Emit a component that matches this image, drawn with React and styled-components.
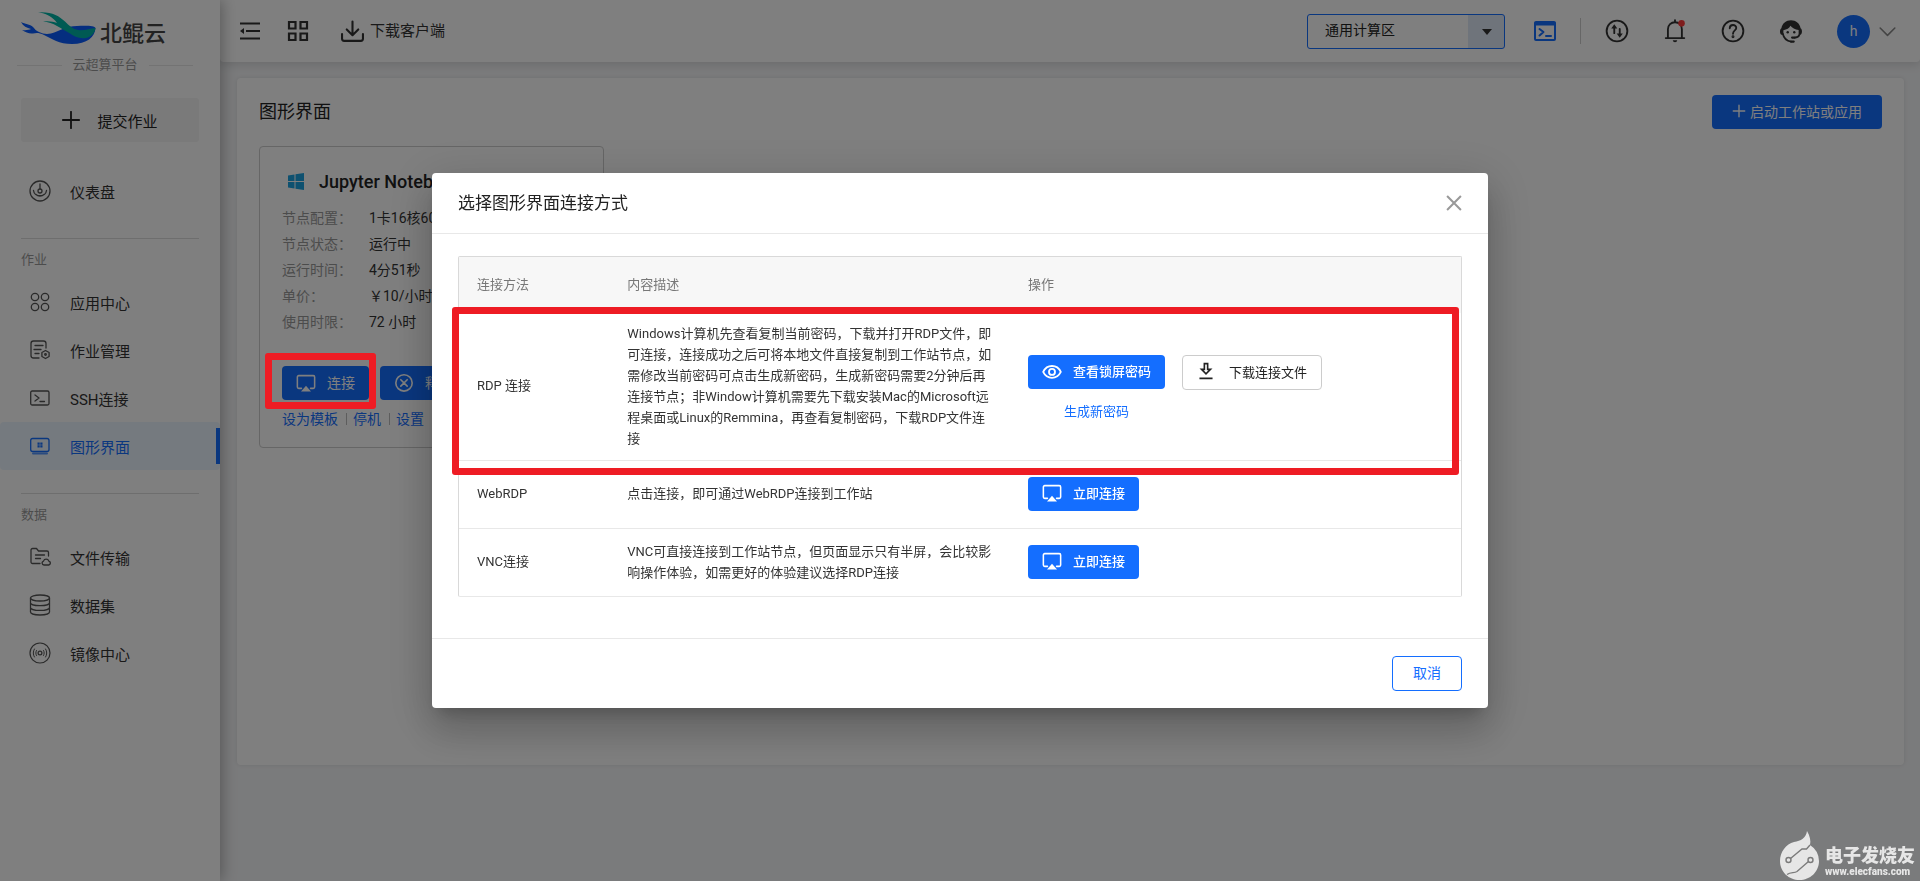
import React from 'react';
import styled, { createGlobalStyle, css } from 'styled-components';

const font = 'Roboto, "Noto Sans CJK SC", sans-serif';
const blue = '#146eff';
const red = '#ee1c24';

const GlobalStyle = createGlobalStyle`
  *, *::before, *::after { box-sizing: border-box; }
  body { margin: 0; font-family: ${font}; font-size: 14px; color: #222; background: #f5f6f8; }
  button, select { font-family: inherit; cursor: pointer; }
  button { padding: 0; border: 0; background: none; color: inherit; }
  a { text-decoration: none; color: ${blue}; }
  svg { display: block; flex: none; }
  h1, h2, h3, p, ul, dl, dd { margin: 0; padding: 0; font-weight: 400; }
`;

const Page = styled.div`
  display: flex;
  min-height: 100vh;
`;

/* ---------- sidebar ---------- */
const Sidebar = styled.aside`
  position: relative;
  z-index: 2;
  flex: none;
  width: 220px;
  background: #fff;
  box-shadow: 2px 0 14px rgba(0, 0, 0, 0.3);
`;
const Brand = styled.div`
  display: flex;
  align-items: flex-end;
  gap: 3px;
  height: 50px;
  padding-left: 21px;
  font-size: 22px;
  font-weight: 500;
  line-height: 32px;
  color: #444;
  svg { margin-bottom: 5px; }
`;
const Platform = styled.p`
  display: flex;
  align-items: center;
  gap: 11px;
  margin: 5px 27px 0 17px;
  font-size: 13px;
  line-height: 20px;
  color: #999;
  &::before, &::after { content: ''; flex: 1; height: 1px; background: #e6e6e6; }
`;
const SubmitButton = styled.button`
  display: flex;
  align-items: center;
  justify-content: center;
  gap: 17px;
  width: 178px;
  height: 44px;
  margin: 23px 21px 25px;
  border-radius: 3px;
  background: #f4f4f4;
  font-size: 15px;
`;
const MenuList = styled.ul`
  list-style: none;
`;
const MenuLink = styled.a`
  position: relative;
  display: flex;
  align-items: center;
  gap: 19px;
  height: 48px;
  padding-left: 29px;
  font-size: 15px;
  color: #333;
  svg { color: #555; }
  ${p => p.$active && css`
    border-radius: 4px;
    background: #ebf5ff;
    color: ${blue};
    svg { color: ${blue}; }
    &::after {
      content: '';
      position: absolute;
      right: 0;
      top: 6px;
      width: 4px;
      height: 36px;
      background: ${blue};
    }
  `}
`;
const GroupTitle = styled.h3`
  margin: 23px 21px 8px;
  padding-top: 11px;
  border-top: 1px solid #dcdcdc;
  font-size: 13px;
  line-height: 20px;
  color: #999;
`;

/* ---------- header ---------- */
const Main = styled.div`
  flex: 1;
  min-width: 0;
`;
const Header = styled.header`
  display: flex;
  align-items: center;
  justify-content: space-between;
  height: 62px;
  padding: 0 24px 0 19px;
  border-radius: 0 0 4px 4px;
  background: #fff;
  box-shadow: 0 3px 10px rgba(0, 0, 0, 0.12);
`;
const HeaderGroup = styled.div`
  display: flex;
  align-items: center;
  gap: ${p => p.$gap}px;
`;
const IconButton = styled.button`
  display: flex;
  align-items: center;
  color: ${p => p.$color || '#333'};
`;
const ClientButton = styled(IconButton)`
  gap: 6px;
  margin-left: 6px;
  font-size: 15px;
  line-height: 24px;
`;
const RegionPicker = styled.label`
  position: relative;
  display: block;
  margin-right: 5px;
`;
const RegionSelect = styled.select`
  appearance: none;
  width: 198px;
  height: 35px;
  padding: 0 50px 2px 17px;
  border: 1px solid ${blue};
  border-radius: 3px;
  background: linear-gradient(#dfe8f7, #dfe8f7) right / 36px 100% no-repeat, #fff;
  font-size: 14px;
  color: #222;
`;
const Caret = styled.i`
  position: absolute;
  right: 13px;
  top: 15px;
  border: 5px solid transparent;
  border-top: 6px solid #333;
  border-bottom: 0;
  pointer-events: none;
`;
const Separator = styled.i`
  width: 1px;
  height: 26px;
  background: #ccc;
`;
const Account = styled.button`
  display: flex;
  align-items: center;
  gap: 9px;
  color: #888;
`;
const Avatar = styled.span`
  width: 33px;
  height: 33px;
  border-radius: 50%;
  background: ${blue};
  color: #fff;
  font-size: 14px;
  line-height: 33px;
  text-align: center;
`;

/* ---------- content ---------- */
const Panel = styled.main`
  margin: 16px 16px 0 17px;
  min-height: calc(100vh - 194px);
  padding: 17px 22px;
  border-radius: 4px;
  background: #fff;
  box-shadow: 0 0 4px rgba(0, 0, 0, 0.1);
`;
const PanelHead = styled.div`
  display: flex;
  align-items: center;
  justify-content: space-between;
  margin-bottom: 17px;
`;
const PanelTitle = styled.h1`
  font-size: 18px;
  line-height: 30px;
`;
const Button = styled.button`
  display: inline-flex;
  align-items: center;
  gap: ${p => p.$gap ?? 11}px;
  height: ${p => (p.$outline ? 35 : 34)}px;
  padding: 0 ${p => p.$pad ?? 14}px 3px;
  border: ${p => (p.$outline ? '1px solid ' + p.$outline : '0')};
  border-radius: 4px;
  background: ${p => (p.$outline ? '#fff' : blue)};
  color: ${p => p.$text || '#fff'};
  font-size: ${p => p.$size || 13}px;
  font-weight: ${p => (p.$bold ? 500 : 400)};
  white-space: nowrap;
`;
const Card = styled.section`
  width: 345px;
  padding: 21px 22px 18px;
  border: 1px solid #ccc;
  border-radius: 4px;
`;
const CardTitle = styled.h2`
  display: flex;
  align-items: center;
  gap: 15px;
  padding-left: 6px;
  margin-bottom: 9px;
  font-size: 18px;
  font-weight: 500;
  line-height: 27px;
  white-space: nowrap;
`;
const Spec = styled.dl`
  display: grid;
  grid-template-columns: 87px 1fr;
  grid-auto-rows: 26px;
  align-items: center;
  dt { color: #999; }
  dd { color: #333; }
`;
const CardActions = styled.div`
  display: flex;
  gap: 11px;
  margin: 32px 0 9px;
`;
const Marked = styled.div`
  position: relative;
  &::after {
    content: '';
    position: absolute;
    z-index: 20;
    inset: -13px -7px -9px -17px;
    border: 7px solid ${red};
    border-radius: 3px;
    pointer-events: none;
  }
`;
const CardLinks = styled.div`
  display: flex;
  line-height: 20px;
  a + a {
    margin-left: 8px;
    padding-left: 7px;
    background: linear-gradient(#bbb, #bbb) left / 1px 12px no-repeat;
  }
`;

/* ---------- dialog ---------- */
const Overlay = styled.div`
  position: fixed;
  inset: 0;
  z-index: 10;
  display: flex;
  align-items: center;
  justify-content: center;
  background: rgba(0, 0, 0, 0.5);
`;
const Dialog = styled.div`
  width: 55%;
  border-radius: 4px;
  background: #fff;
  box-shadow: 0 11px 15px -7px rgba(0, 0, 0, 0.2), 0 24px 38px 3px rgba(0, 0, 0, 0.14),
    0 9px 46px 8px rgba(0, 0, 0, 0.12);
`;
const DialogHead = styled.div`
  display: flex;
  align-items: center;
  justify-content: space-between;
  height: 61px;
  padding: 0 26px;
  border-bottom: 1px solid #e8e8e8;
`;
const DialogTitle = styled.h2`
  font-size: 17px;
  line-height: 24px;
`;
const DialogBody = styled.div`
  position: relative;
  padding: 22px 26px 41px;
`;
const DialogFoot = styled.div`
  display: flex;
  justify-content: flex-end;
  padding: 17px 26px;
  border-top: 1px solid #e8e8e8;
`;
const Table = styled.table`
  width: 100%;
  table-layout: fixed;
  border: 1px solid #d9d9d9;
  border-bottom-color: #e8e8e8;
  border-radius: 2px;
  border-spacing: 0;
  font-size: 13px;
  line-height: 21px;
  color: #333;
  th, td { padding: 0 18px 2px; text-align: left; font-weight: 400; }
  th { height: 56px; background: #f7f7f7; color: #777; }
  td { height: 68px; }
  tbody tr + tr td { border-top: 1px solid #e8e8e8; }
`;
const Col = styled.col`
  width: ${p => p.$width};
`;
const TallRow = styled.tr`
  && td { height: 147px; }
`;
const RowMark = styled.div`
  position: absolute;
  top: 73px;
  left: 20px;
  right: 29px;
  height: 168px;
  border: 7px solid ${red};
  border-radius: 3px;
  pointer-events: none;
`;
const Actions = styled.div`
  display: grid;
  grid-template-columns: auto auto;
  justify-content: start;
  justify-items: center;
  column-gap: 17px;
  row-gap: 11px;
  padding-top: 6px;
`;

/* ---------- watermark ---------- */
const Watermark = styled.div`
  position: fixed;
  right: 5px;
  bottom: 1px;
  z-index: 30;
  display: flex;
  align-items: flex-end;
  gap: 6px;
  color: #e6e6e6;
`;
const WatermarkText = styled.div`
  padding-bottom: 3px;
  font-size: 18px;
  font-weight: 900;
  line-height: 20px;
  small { display: block; font-size: 10px; font-weight: 900; line-height: 11px; }
`;

/* ---------- icons ---------- */
const Icon = ({ size = 22, sw = 1.3, children, ...rest }) => (
  <svg width={size} height={size} viewBox="0 0 22 22" fill="none" stroke="currentColor"
    strokeWidth={sw} strokeLinecap="round" strokeLinejoin="round" aria-hidden="true" {...rest}>
    {children}
  </svg>
);
const solid = { fill: 'currentColor', stroke: 'none' };

const icons = {
  dash: <Icon><circle cx="11" cy="11" r="10" /><circle cx="11" cy="11" r="2" /><path d="M11 4v5M4.500 10.500c1 7 12 7 13 0M7 14.500c2 2 6 2 8 0" /></Icon>,
  apps: <Icon><circle cx="6" cy="6" r="3.700" /><circle cx="16" cy="6" r="3.700" /><circle cx="6" cy="16" r="3.700" /><circle cx="16" cy="16" r="3.700" /></Icon>,
  jobs: <Icon><path d="M17 9V4.500A2.500 2.500 0 0 0 14.500 2h-10A2.500 2.500 0 0 0 2 4.500v12A2.500 2.500 0 0 0 4.500 19H10M6 6.500h8M5 10.500h7M6 14.500h4" /><path d="M16.500 11.500l3.600 2v4l-3.600 2-3.600-2v-4z" /><circle cx="16.500" cy="15.500" r=".8" /></Icon>,
  ssh: <Icon><rect x="1.700" y="4" width="18.300" height="14" rx="1.500" /><path d="M6 8l4 3-4 3M11 14.500h4.500" /></Icon>,
  gui: <Icon><rect x="1.700" y="3.500" width="18.300" height="13" rx="2" /><path d="M4 18.500h14" strokeWidth="2" opacity=".7" /><path {...solid} d="M8.500 7.500h2.200v2.200H8.500zM11.300 7.500h2.200v2.200h-2.200zM8.500 10.300h2.200v2.200H8.500zM11.300 10.300h2.200v2.200h-2.200z" /></Icon>,
  files: <Icon><path d="M11 17.500H3.500A1.500 1.500 0 0 1 2 16V4a1.500 1.500 0 0 1 1.500-1.500h4L9.500 5H18a1.500 1.500 0 0 1 1.500 1.500V10M6.500 9h9M6.500 12.500h5" /><path d="M15 19a2 2 0 0 1-.5-3.900 2.800 2.800 0 0 1 5.300 0A2 2 0 0 1 19.800 19z" /></Icon>,
  data: <Icon><ellipse cx="11" cy="4" rx="9.500" ry="3" /><path d="M1.500 4v14c0 1.700 4.200 3 9.500 3s9.500-1.300 9.500-3V4M1.500 8.700c0 1.700 4.200 3 9.500 3s9.500-1.300 9.500-3M1.500 13.400c0 1.700 4.200 3 9.500 3s9.500-1.300 9.500-3" /></Icon>,
  image: <Icon sw={1.200}><circle cx="11" cy="11" r="10" /><circle cx="11" cy="11" r="1.900" /><path d="M7.500 8.500c-.9 1.700-.9 3.300 0 5M14.500 8.500c.9 1.700.9 3.300 0 5M5.400 7c-1.500 2.600-1.500 5.400 0 8M16.600 7c1.500 2.600 1.500 5.400 0 8" strokeWidth="1" /></Icon>,
  plus: <Icon size={18} sw={2.200}><path d="M11 1v20M1 11h20" /></Icon>,
  plusThin: <Icon size={14} sw={2.200}><path d="M11 2v18M2 11h18" /></Icon>,
  fold: <Icon sw={2} strokeLinecap="butt"><path d="M1 3.500h20M7 11h14M1 18.500h20" /><path {...solid} d="M1 11l4-3v6z" /></Icon>,
  grid: <Icon sw={2.200} strokeLinejoin="miter"><path d="M2 2h6.500v6.500H2zM13.500 2H20v6.500h-6.500zM2 13.500h6.500V20H2zM13.500 13.500H20V20h-6.500z" /></Icon>,
  download: <Icon size={23} sw={2}><path d="M11 1.500V14M5.500 9l5.500 5.500L16.500 9M1 13.500V18a2 2 0 0 0 2 2h16a2 2 0 0 0 2-2v-4.500" /></Icon>,
  terminal: <Icon sw={2}><rect x="1" y="2" width="20" height="18" rx="1" /><path d="M1 4h20" strokeWidth="3" /><path d="M5.500 9l4 3-4 3.500M12 16h5" /></Icon>,
  transfer: <Icon size={24} sw={1.700}><circle cx="11" cy="11" r="9.500" /><path d="M8.500 13v-6M13.500 9v6" /><path {...solid} d="M5.700 8.700l2.800-4 2.800 4zM10.700 13.300l2.800 4 2.800-4z" /></Icon>,
  bell: <Icon size={24} sw={1.700}><path d="M2.500 17.500h17M4.500 17V9.500c0-4 3-6.500 6.500-6.500 3.500 0 6.300 2.500 6.300 6.500V17M11 1v1.500" /><path {...solid} d="M9 19.500h4c0 2.300-4 2.300-4 0z" /><circle cx="17" cy="4" r="3" fill="#ff3b3b" stroke="none" /></Icon>,
  help: <Icon size={24} sw={1.700}><circle cx="11" cy="11" r="9.500" /><path d="M8 8.500c0-4 6-4 6-.3 0 2.300-3 2.300-3 5.300" /><circle cx="11" cy="16.300" r=".5" /></Icon>,
  agent: <Icon size={24} sw={1.600}><path {...solid} d="M2.200 8.500C3 4 6.500 1.200 11 1.200S19 4 19.800 8.500c1.700 1 1.700 5 0 6H18V10c-3.300-.3-6-1.700-7.500-3.800C9.300 8.500 7.200 9.700 4 10.200v4.300H2.200c-1.700-1-1.700-5 0-6z" /><path d="M3.500 13.500c.9 4.200 4 6.700 7.500 7.200M18.700 14.500c-.5 1.800-2 2.500-4.200 2.500" /><path d="M12 17h2.500M11 20.700h2.500" strokeWidth="2" /><circle {...solid} cx="8" cy="12.200" r="1.100" /><circle {...solid} cx="14" cy="12.200" r="1.100" /></Icon>,
  chevron: <Icon size={17} sw={2}><path d="M1.500 6.500L11 16l9.500-9.500" /></Icon>,
  screen: <Icon size={20} sw={1.700}><path d="M6 18H3a1.500 1.500 0 0 1-1.500-1.500v-11A1.500 1.500 0 0 1 3 4h16a1.500 1.500 0 0 1 1.500 1.500v11A1.500 1.500 0 0 1 19 18h-3" /><path {...solid} d="M11 15l5.500 6.500h-11z" /></Icon>,
  release: <Icon size={20} sw={1.800}><circle cx="11" cy="12" r="9" /><path d="M7.500 8.500l7 7M14.500 8.500l-7 7" /></Icon>,
  eye: <Icon size={20} sw={2}><path d="M1.300 12C5.500 3.300 16.500 3.300 20.700 12 16.500 20.700 5.500 20.700 1.300 12z" /><circle cx="11" cy="12" r="3.300" /></Icon>,
  save: <Icon size={18} sw={2} strokeLinecap="butt" strokeLinejoin="miter"><path d="M9 2h4v7h3.500L11 14.500 5.500 9H9zM3 20h16" /></Icon>,
  close: <Icon size={16} sw={2.800} strokeLinecap="butt"><path d="M1.500 1.500l19 19M20.500 1.500l-19 19" /></Icon>,
};

const WhaleLogo = () => (
  <svg width="76" height="33" viewBox="0 0 76 33" aria-hidden="true">
    <path fill="#0a5cff" d="M0 10c4 2 9 2 12 5 2 2 3 4 6 5 4 2 8 2.500 12 1.500 9-2.500 15-7.500 26-7.500 8-.5 18-.5 18.500 2C74 25 66 32 51 32c-13 0-20-5-28-9-5-2.500-8-2-11-1.500-4 .5-7-1-11-3.500 4 .5 7 0 9-1C6 16 2 14 0 10z" />
    <path fill="#00b5a6" d="M17 .3C31-.5 38 4 44 9.500c4 4.500 8 7.500 13 8.500 6 1 12-1.500 17.500-2C74 21 70 25 65 26c-7 1-12-1.500-16-4.500-4-2-8-5-13-7.500C32 11.500 27 10 22 9.500c6-.8 10 0 14 1.500C32 5 25 1.500 17 .3z" />
  </svg>
);
const WindowsLogo = () => (
  <svg width="16" height="17" viewBox="0 0 16 17" fill="#1da3e0" aria-hidden="true">
    <path d="M0 2.500L6.500 1.500v6.500H0zM7.500 1.300L16 0v8H7.500zM0 9h6.500v6.600L0 14.600zM7.500 9H16v8l-8.500-1.300z" />
  </svg>
);
const FlameLogo = () => (
  <svg width="39" height="49" viewBox="0 0 39 49" aria-hidden="true">
    <path fill="currentColor" d="M27 0c3 5 4 10 3 14a19.500 19.500 0 0 1 9 16c0 11-9 19-19.500 19S0 41 0 30c0-9 6-17 14-19 7-1 12-4 13-11z" />
    <g fill="none" stroke="#7b7b7b" strokeWidth="1.400">
      <circle cx="8.500" cy="29" r="2.500" /><circle cx="30.500" cy="29" r="2.500" />
      <path d="M10.500 27.500L22 18h4.500l3.500-4M28.500 30.500L17 40.500c-3 2-6 0-10 3" />
    </g>
  </svg>
);

/* ---------- page parts ---------- */
const MenuItem = ({ icon, label, active }) => (
  <li><MenuLink href="#" $active={active}>{icons[icon]}{label}</MenuLink></li>
);

const specs = [
  ['节点配置：', '1卡16核60G'],
  ['节点状态：', '运行中'],
  ['运行时间：', '4分51秒'],
  ['单价：', '￥10/小时'],
  ['使用时限：', '72 小时'],
];

export default function App() {
  return (
    <>
      <GlobalStyle />
      <Page>
        <Sidebar>
          <Brand><WhaleLogo />北鲲云</Brand>
          <Platform>云超算平台</Platform>
          <SubmitButton>{icons.plus}提交作业</SubmitButton>
          <MenuList>
            <MenuItem icon="dash" label="仪表盘" />
          </MenuList>
          <GroupTitle>作业</GroupTitle>
          <MenuList>
            <MenuItem icon="apps" label="应用中心" />
            <MenuItem icon="jobs" label="作业管理" />
            <MenuItem icon="ssh" label="SSH连接" />
            <MenuItem icon="gui" label="图形界面" active />
          </MenuList>
          <GroupTitle>数据</GroupTitle>
          <MenuList>
            <MenuItem icon="files" label="文件传输" />
            <MenuItem icon="data" label="数据集" />
            <MenuItem icon="image" label="镜像中心" />
          </MenuList>
        </Sidebar>

        <Main>
          <Header>
            <HeaderGroup $gap={26}>
              <IconButton aria-label="收起菜单">{icons.fold}</IconButton>
              <IconButton aria-label="应用">{icons.grid}</IconButton>
              <ClientButton>{icons.download}下载客户端</ClientButton>
            </HeaderGroup>
            <HeaderGroup $gap={24}>
              <RegionPicker>
                <RegionSelect aria-label="计算区" defaultValue="通用计算区">
                  <option>通用计算区</option>
                </RegionSelect>
                <Caret />
              </RegionPicker>
              <IconButton $color={blue} aria-label="终端">{icons.terminal}</IconButton>
              <Separator />
              <HeaderGroup $gap={34}>
                <IconButton aria-label="传输">{icons.transfer}</IconButton>
                <IconButton aria-label="通知">{icons.bell}</IconButton>
                <IconButton aria-label="帮助">{icons.help}</IconButton>
                <IconButton aria-label="客服">{icons.agent}</IconButton>
                <Account aria-label="账户"><Avatar>h</Avatar>{icons.chevron}</Account>
              </HeaderGroup>
            </HeaderGroup>
          </Header>

          <Panel>
            <PanelHead>
              <PanelTitle>图形界面</PanelTitle>
              <Button $gap={4} $pad={20} $size={14}>{icons.plusThin}启动工作站或应用</Button>
            </PanelHead>
            <Card>
              <CardTitle><WindowsLogo />Jupyter Notebook</CardTitle>
              <Spec>
                {specs.map(([k, v]) => (
                  <React.Fragment key={k}><dt>{k}</dt><dd>{v}</dd></React.Fragment>
                ))}
              </Spec>
              <CardActions>
                <Marked><Button $size={14}>{icons.screen}连接</Button></Marked>
                <Button $size={14}>{icons.release}释放</Button>
              </CardActions>
              <CardLinks>
                <a href="#">设为模板</a><a href="#">停机</a><a href="#">设置</a>
              </CardLinks>
            </Card>
          </Panel>
        </Main>
      </Page>

      <Overlay>
        <Dialog role="dialog" aria-labelledby="dialog-title">
          <DialogHead>
            <DialogTitle id="dialog-title">选择图形界面连接方式</DialogTitle>
            <IconButton $color="#999" aria-label="关闭">{icons.close}</IconButton>
          </DialogHead>
          <DialogBody>
            <Table>
              <colgroup><Col $width="15%" /><Col $width="40%" /><Col $width="45%" /></colgroup>
              <thead>
                <tr><th>连接方法</th><th>内容描述</th><th>操作</th></tr>
              </thead>
              <tbody>
                <TallRow>
                  <td>RDP 连接</td>
                  <td>Windows计算机先查看复制当前密码，下载并打开RDP文件，即可连接，连接成功之后可将本地文件直接复制到工作站节点，如需修改当前密码可点击生成新密码，生成新密码需要2分钟后再连接节点；非Window计算机需要先下载安装Mac的Microsoft远程桌面或Linux的Remmina，再查看复制密码，下载RDP文件连接</td>
                  <td>
                    <Actions>
                      <Button $bold>{icons.eye}查看锁屏密码</Button>
                      <Button $outline="#ccc" $text="#222" $gap={14}>{icons.save}下载连接文件</Button>
                      <a href="#">生成新密码</a>
                    </Actions>
                  </td>
                </TallRow>
                <tr>
                  <td>WebRDP</td>
                  <td>点击连接，即可通过WebRDP连接到工作站</td>
                  <td><Button $bold>{icons.screen}立即连接</Button></td>
                </tr>
                <tr>
                  <td>VNC连接</td>
                  <td>VNC可直接连接到工作站节点，但页面显示只有半屏，会比较影响操作体验，如需更好的体验建议选择RDP连接</td>
                  <td><Button $bold>{icons.screen}立即连接</Button></td>
                </tr>
              </tbody>
            </Table>
            <RowMark />
          </DialogBody>
          <DialogFoot>
            <Button $outline={blue} $text={blue} $size={14} $pad={20}>取消</Button>
          </DialogFoot>
        </Dialog>
      </Overlay>

      <Watermark>
        <FlameLogo />
        <WatermarkText>电子发烧友<small>www.elecfans.com</small></WatermarkText>
      </Watermark>
    </>
  );
}
